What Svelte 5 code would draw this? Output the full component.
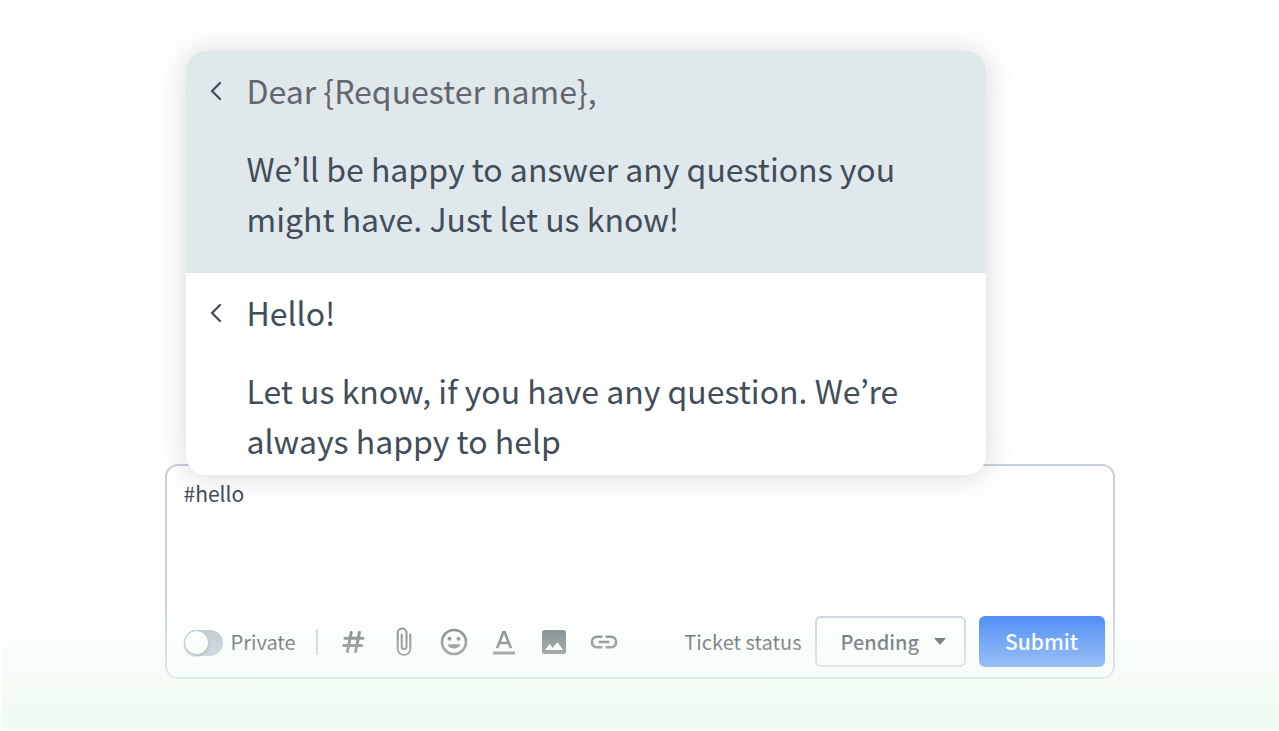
<script>
  const replies = [
    {
      title: 'Dear {Requester name},',
      body: 'We’ll be happy to answer any questions you might have. Just let us know!',
      active: true
    },
    {
      title: 'Hello!',
      body: 'Let us know, if you have any question. We’re always happy to help',
      active: false
    }
  ];

  let message = $state('#hello');
  let isPrivate = $state(false);
  let status = $state('Pending');
</script>

<main class="stage">
  <div class="workspace">
    <ul class="replies">
      {#each replies as reply}
        <li>
          <button type="button" class="reply" class:active={reply.active}>
            <svg class="chevron" width="14" height="20" viewBox="0 0 14 20" aria-hidden="true">
              <path d="M11 2 L3 10 L11 18" />
            </svg>
            <span class="copy">
              <span class="title">{reply.title}</span>
              <span class="body">{reply.body}</span>
            </span>
          </button>
        </li>
      {/each}
    </ul>

    <form class="composer" onsubmit={(e) => e.preventDefault()}>
      <textarea class="message" aria-label="Message" bind:value={message}></textarea>

      <div class="toolbar">
        <label class="private">
          <input type="checkbox" class="switch" bind:checked={isPrivate} />
          <span>Private</span>
        </label>
        <span class="divider"></span>

        <div class="tools">
          <button type="button" class="tool" aria-label="Insert canned response">
            <svg width="30" height="30" viewBox="0 0 30 30" aria-hidden="true">
              <path class="thick" d="M12.2 5.500 L8.400 24.500 M20.400 5.500 L16.600 24.500 M5.900 11.200 H23.900 M4.700 18.500 H22.700" />
            </svg>
          </button>
          <button type="button" class="tool" aria-label="Attach file">
            <svg width="30" height="30" viewBox="0 0 30 30" aria-hidden="true">
              <path class="line" d="M21.300 7.500 V21.700 A6.300 6.300 0 0 1 8.700 21.700 V6 A4.400 4.400 0 0 1 17.500 6 V19.700 A2.400 2.400 0 0 1 12.700 19.700 V7.500" />
            </svg>
          </button>
          <button type="button" class="tool" aria-label="Insert emoji">
            <svg width="30" height="30" viewBox="0 0 30 30" aria-hidden="true">
              <circle class="ring" cx="15" cy="15" r="12" />
              <circle cx="10.500" cy="11.800" r="2" />
              <circle cx="19.500" cy="11.800" r="2" />
              <path d="M8.600 17.200 H21.400 A6.900 6.900 0 0 1 8.600 17.200 Z" />
            </svg>
          </button>
          <button type="button" class="tool" aria-label="Text formatting">
            <svg width="30" height="30" viewBox="0 0 30 30" aria-hidden="true">
              <path fill-rule="evenodd" d="M13.500 4 H16.500 L23.400 21.200 H20.400 L18.900 17.300 H11.100 L9.600 21.200 H6.600 Z M15 7 L12.100 14.800 H17.900 Z" />
              <path d="M4 24.500 H26 V27.500 H4 Z" />
            </svg>
          </button>
          <button type="button" class="tool" aria-label="Insert image">
            <svg width="30" height="30" viewBox="0 0 30 30" aria-hidden="true">
              <path fill-rule="evenodd" d="M5.500 3 H24.500 A2.500 2.500 0 0 1 27 5.500 V24.500 A2.500 2.500 0 0 1 24.500 27 H5.500 A2.500 2.500 0 0 1 3 24.500 V5.500 A2.500 2.500 0 0 1 5.500 3 Z M6 23 H24.300 L18.400 15.200 L13.800 21 L10.500 17 Z" />
            </svg>
          </button>
          <button type="button" class="tool" aria-label="Insert link">
            <svg width="30" height="30" viewBox="0 0 30 30" aria-hidden="true">
              <path class="ring" d="M13.400 9.700 H8.200 A5.300 5.300 0 0 0 8.200 20.300 H13.400 M16.600 9.700 H21.800 A5.300 5.300 0 0 1 21.800 20.300 H16.600" />
              <path d="M9.600 13.700 H20.400 V16.300 H9.600 Z" />
            </svg>
          </button>
        </div>

        <div class="actions">
          <label class="status-label" for="ticket-status">Ticket status</label>
          <div class="picker">
            <select id="ticket-status" bind:value={status}>
              <option>Pending</option>
              <option>Open</option>
              <option>Solved</option>
            </select>
            <svg class="caret" width="12" height="7" viewBox="0 0 12 7" aria-hidden="true">
              <path d="M0 0 H12 L6 7 Z" />
            </svg>
          </div>
          <button type="submit" class="submit">Submit</button>
        </div>
      </div>
    </form>
  </div>
  <div class="fade"></div>
</main>

<style>
  .stage {
    --ink: #424d59;
    --line: #c8d1d9;
    --icon: #6c7479;
    box-sizing: border-box;
    position: relative;
    min-height: 100vh;
    padding: 51px 24px;
    background: #fff;
    color: var(--ink);
    font-family: 'Noto Sans CJK KR', 'Noto Sans', sans-serif;
    font-size: 20px;
  }

  .workspace {
    max-width: 950px;
    margin: 0 auto;
  }

  .replies {
    position: relative;
    z-index: 1;
    max-width: 800px;
    margin: 0 20px -11px 21px;
    padding: 0;
    list-style: none;
    overflow: hidden;
    border-radius: 20px;
    background: #fff;
    box-shadow: 0 1px 30px rgba(40, 46, 52, 0.19);
  }

  .reply {
    box-sizing: border-box;
    display: flex;
    gap: 24px;
    width: 100%;
    padding: 14px 64px 10px 23px;
    border: 0;
    background: transparent;
    color: inherit;
    font: inherit;
    font-size: 32px;
    line-height: 50px;
    text-align: left;
  }

  .reply.active {
    padding-bottom: 30px;
    background: #e0e8eb;
  }

  .chevron {
    flex: none;
    margin-top: 16px;
    fill: none;
    stroke: var(--ink);
    stroke-width: 2.3;
    stroke-linecap: round;
    stroke-linejoin: round;
  }

  .title,
  .body {
    display: block;
  }

  .title {
    margin-bottom: 28px;
  }

  .active .title {
    color: #63666e;
  }

  .composer {
    box-sizing: border-box;
    display: flex;
    flex-direction: column;
    padding: 9px 8px 10px 17px;
    border: 2px solid var(--line);
    border-radius: 13px;
    background: #fff;
  }

  .message {
    box-sizing: border-box;
    width: 100%;
    height: 141px;
    padding: 2px 0 0;
    border: 0;
    outline: 0;
    resize: none;
    background: transparent;
    color: inherit;
    font: inherit;
    font-size: 21px;
    line-height: 32px;
  }

  .toolbar,
  .private,
  .tools,
  .actions {
    display: flex;
    align-items: center;
  }

  .private {
    gap: 8px;
  }

  .switch {
    appearance: none;
    width: 39px;
    height: 26px;
    margin: 2px 0 0;
    border-radius: 13px;
    background: #b4c0ca;
  }

  .switch::before {
    content: '';
    display: block;
    box-sizing: border-box;
    width: 25px;
    height: 25px;
    border: 1px solid #a3b0bc;
    border-radius: 50%;
    background: #fff;
    box-shadow: 0 2px 2px rgba(60, 70, 80, 0.3);
  }

  .switch:checked::before {
    margin-left: 14px;
  }

  .divider {
    width: 2px;
    height: 26px;
    margin-left: 20px;
    background: var(--line);
  }

  .tools {
    margin-left: 21px;
    gap: 20px;
  }

  .tool {
    display: flex;
    padding: 0;
    border: 0;
    background: transparent;
  }

  .tool svg {
    fill: var(--icon);
  }

  .tool .line,
  .tool .ring,
  .tool .thick {
    fill: none;
    stroke: var(--icon);
    stroke-width: 2;
    stroke-linecap: round;
  }

  .tool .ring {
    stroke-width: 2.6;
    stroke-linecap: butt;
  }

  .tool .thick {
    stroke-width: 3;
  }

  .actions {
    margin-left: auto;
    gap: 13px;
  }

  .picker {
    display: grid;
    align-items: center;
  }

  .picker select,
  .caret {
    grid-area: 1 / 1;
  }

  .picker select {
    appearance: none;
    box-sizing: border-box;
    width: 151px;
    height: 51px;
    padding: 0 40px 0 24px;
    border: 2px solid var(--line);
    border-radius: 6px;
    background: transparent;
    color: inherit;
    font: inherit;
    font-weight: 500;
  }

  .caret {
    justify-self: end;
    margin-right: 20px;
    fill: var(--ink);
    pointer-events: none;
  }

  .submit {
    width: 126px;
    height: 51px;
    padding: 0 0 2px;
    border: 0;
    border-radius: 6px;
    background: #3a7ff6;
    color: #fff;
    font: inherit;
    font-size: 21px;
    font-weight: 500;
  }

  .fade {
    position: absolute;
    z-index: 2;
    inset: auto 0 2px 2px;
    height: 130px;
    background: linear-gradient(rgba(239, 251, 242, 0), rgb(239, 251, 242));
    pointer-events: none;
  }
</style>
